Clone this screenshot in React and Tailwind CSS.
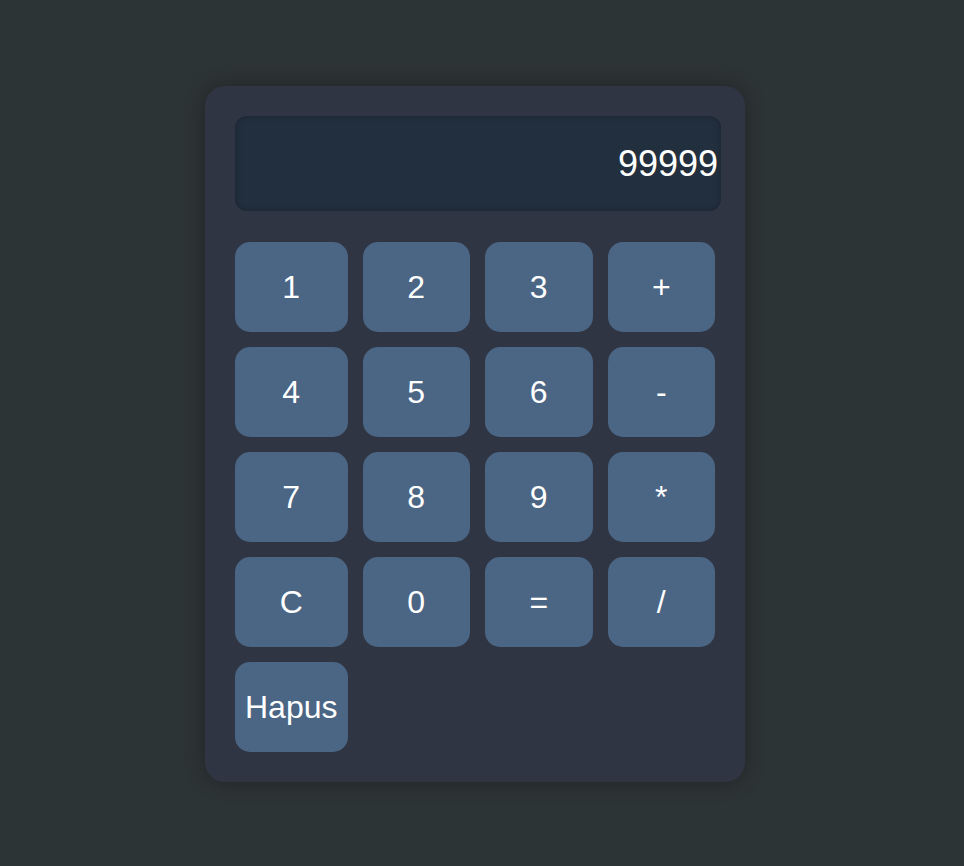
import React, { useState } from 'react';

const keys = ['1', '2', '3', '+', '4', '5', '6', '-', '7', '8', '9', '*', 'C', '0', '=', '/', 'Hapus'];

const Key = ({ label, onClick }) => (
  <button
    onClick={onClick}
    className="h-[90px] px-[10px] rounded-[15px] bg-[#4b6584] text-white text-[32px] leading-none hover:bg-[#5a7596] transition-colors"
  >
    {label}
  </button>
);

export default function App() {
  const [display, setDisplay] = useState('99999');

  const press = (k) => {
    if (k === 'C') return setDisplay('');
    if (k === 'Hapus') return setDisplay((d) => d.slice(0, -1));
    if (k === '=') {
      try {
        // eslint-disable-next-line no-new-func
        setDisplay(String(Function(`return (${display})`)()));
      } catch (e) {
        setDisplay('Error');
      }
      return;
    }
    setDisplay((d) => d + k);
  };

  return (
    <div
      className="min-h-screen flex items-center justify-center bg-[#2d3436] pr-[14px] pt-[2px]"
      style={{ fontFamily: '"Liberation Sans", Arial, sans-serif' }}
    >
      <div className="w-[540px] p-[30px] rounded-[20px] bg-[#2f3542] shadow-[0_0_20px_rgba(0,0,0,0.3)]">
        {/* Display */}
        <div className="w-[486px] h-[95px] flex items-center justify-end pr-[3px] rounded-[12px] bg-[#222f3e] shadow-[inset_0_0_6px_rgba(0,0,0,0.25)] text-white text-[36px]">
          {display}
        </div>

        {/* Keys */}
        <div className="mt-[31px] grid grid-cols-[repeat(4,1fr)] gap-[15px]">
          {keys.map((k) => (
            <Key key={k} label={k} onClick={() => press(k)} />
          ))}
        </div>
      </div>
    </div>
  );
}
